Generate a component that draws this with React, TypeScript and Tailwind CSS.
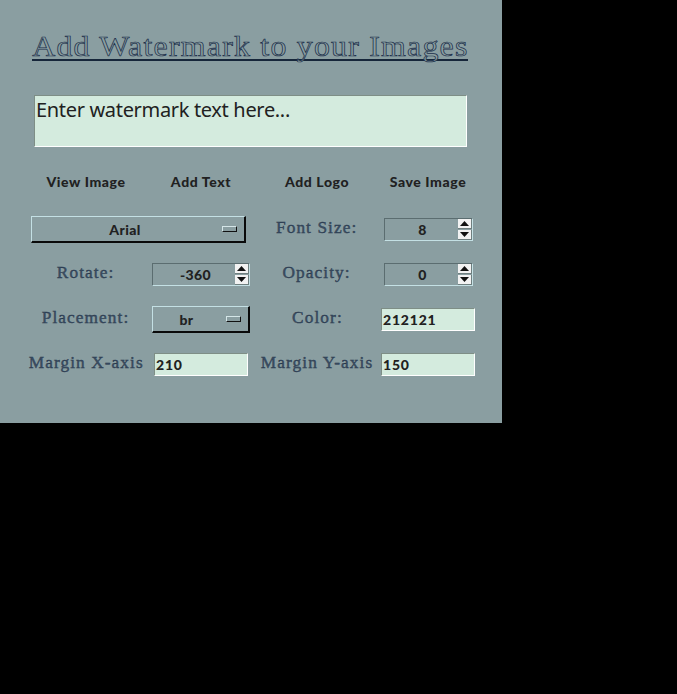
import React from "react";

const bodyFont = "font-['Lato',sans-serif] font-black text-[#212121]";

function Label({ children }: { children: React.ReactNode }) {
  return (
    <div className="justify-self-center whitespace-nowrap pb-[3px] font-['Liberation_Serif',serif] text-[16px] tracking-[1px] text-[#3c4f63] [-webkit-text-stroke:0.35px_#26364c] scale-x-[1.08]">
      {children}
    </div>
  );
}

function Action({ children }: { children: React.ReactNode }) {
  return <div className={`justify-self-center whitespace-nowrap text-[14px] tracking-[0.6px] ${bodyFont}`}>{children}</div>;
}

function Spin({ value, className }: { value: string; className: string }) {
  return (
    <div className={`flex h-[23px] items-center justify-self-center border border-t-[#5b6d70] border-l-[#5b6d70] border-b-[#c4e0e4] border-r-[#c4e0e4] ${className}`}>
      <div className={`flex-1 pl-[3px] text-center text-[14px] tracking-[0.4px] ${bodyFont}`}>{value}</div>
      <div className="flex h-full w-[14px] flex-col gap-px bg-[#8a9ea1]">
        <div className="flex flex-1 items-center justify-center border-r border-b border-r-[#6f7f7f] border-b-[#6f7f7f] bg-[#f2f2f2]">
          <svg width="9" height="5" viewBox="0 0 9 5"><path d="M4.5 0 9 5H0z" fill="#111" /></svg>
        </div>
        <div className="flex flex-1 items-center justify-center border-r border-b border-r-[#6f7f7f] border-b-[#6f7f7f] bg-[#f2f2f2]">
          <svg width="9" height="5" viewBox="0 0 9 5"><path d="M0 0h9L4.5 5z" fill="#111" /></svg>
        </div>
      </div>
    </div>
  );
}

function Select({ value, className, handle }: { value: string; className: string; handle: string }) {
  return (
    <div className={`relative flex h-[27px] items-center justify-center border-t border-l border-t-[#c4e0e4] border-l-[#c4e0e4] border-r-2 border-b-2 border-r-[#0a0a0a] border-b-[#0a0a0a] pt-[2px] text-[14px] tracking-[0.4px] ${bodyFont} ${className}`}>
      <span className={handle}>{value}</span>
      <span className="absolute right-[7px] top-[9px] h-[6px] w-[15px] border border-t-[#d5e6e8] border-l-[#d5e6e8] border-r-[#111] border-b-[#111] bg-[#8a9ea1]" />
    </div>
  );
}

function Field({ value }: { value: string }) {
  return (
    <div className={`flex h-[23px] w-[94px] items-center justify-self-center border border-t-[#7e8e86] border-l-[#7e8e86] border-r-white border-b-white bg-[#d4ebde] pl-[1px] text-[14px] tracking-[0.8px] ${bodyFont}`}>
      {value}
    </div>
  );
}

export default function App() {
  return (
    <div className="min-h-[694px] bg-black">
      <div className="h-[423px] w-[502px] bg-[#8a9ea1] pt-[32px]">
        <div className="ml-[32px] flex h-[29px] w-[436px] justify-center border-b-2 border-[#16263a] font-['Liberation_Serif',serif] text-[29px] leading-[29px] whitespace-nowrap">
          <span className="inline-block scale-x-[1.1] tracking-[1.1px] text-[#8a9ea1] [-webkit-text-stroke:0.7px_#1b2f4a]">
            Add Watermark to your Images
          </span>
        </div>
        <div className="ml-[34px] mt-[34px] h-[52px] w-[433px] border border-t-[#7e8e86] border-l-[#7e8e86] border-r-white border-b-white bg-[#d4ebde] pl-[1px] font-['Noto_Sans',sans-serif] text-[20px] leading-[28px] tracking-[-0.33px] text-[#212121]">
          Enter watermark text here...
        </div>
        <div className="mt-[12px] grid w-[478px] grid-cols-[26px_120px_110px_122px_100px] auto-rows-[45px] items-center">
          <div />
          <Action>View Image</Action>
          <Action>Add Text</Action>
          <Action>Add Logo</Action>
          <Action>Save Image</Action>

          <div />
          <div className="col-span-2 mt-[5px]">
            <Select value="Arial" className="ml-[5px] w-[215px]" handle="mr-[26px]" />
          </div>
          <div className="mt-[5px] justify-self-center"><Label>Font Size:</Label></div>
          <div className="mt-[5px] justify-self-center"><Spin value="8" className="w-[89px]" /></div>

          <div />
          <div className="mt-[5px] justify-self-center"><Label>Rotate:</Label></div>
          <div className="mt-[5px] justify-self-center"><Spin value="-360" className="w-[98px]" /></div>
          <div className="mt-[5px] justify-self-center"><Label>Opacity:</Label></div>
          <div className="mt-[5px] justify-self-center"><Spin value="0" className="w-[89px]" /></div>

          <div />
          <div className="mt-[5px] justify-self-center"><Label>Placement:</Label></div>
          <div className="mt-[5px] justify-self-center"><Select value="br" className="w-[98px]" handle="mr-[28px]" /></div>
          <div className="mt-[5px] justify-self-center"><Label>Color:</Label></div>
          <div className="mt-[5px] justify-self-center"><Field value="212121" /></div>

          <div />
          <div className="mt-[5px] justify-self-center"><Label>Margin X-axis</Label></div>
          <div className="mt-[5px] justify-self-center"><Field value="210" /></div>
          <div className="mt-[5px] justify-self-center"><Label>Margin Y-axis</Label></div>
          <div className="mt-[5px] justify-self-center"><Field value="150" /></div>
        </div>
      </div>
    </div>
  );
}
